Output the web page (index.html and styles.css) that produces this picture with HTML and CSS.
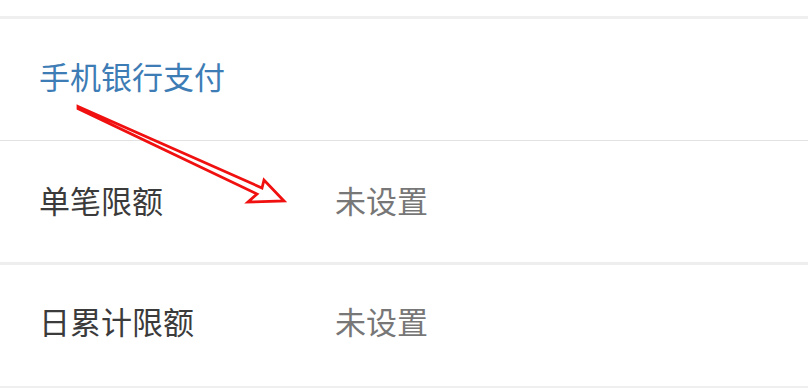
FILE: index.html
```html
<!DOCTYPE html>
<html lang="zh-CN">
<head>
<meta charset="utf-8">
<title>手机银行支付</title>
<link rel="stylesheet" href="styles.css">
</head>
<body>
<div class="page">
  <div class="top-gap"></div>
  <div class="section-title">手机银行支付</div>
  <div class="row row-single">
    <span class="label">单笔限额</span>
    <span class="value">未设置</span>
  </div>
  <div class="row row-daily">
    <span class="label">日累计限额</span>
    <span class="value">未设置</span>
  </div>
  <svg class="arrow" width="808" height="388" viewBox="0 0 808 388">
    <polygon points="78,106.5 262,188 264,180 284,201 248,202 257,194 78,108.5" fill="none" stroke="#f01010" stroke-width="2.8" stroke-linejoin="miter"/>
  </svg>
</div>
</body>
</html>
```
FILE: styles.css
```css
html, body {
  margin: 0;
  padding: 0;
  background: #ffffff;
}
.page {
  position: relative;
  width: 808px;
  height: 388px;
  overflow: hidden;
  font-family: "Noto Sans CJK SC", "Noto Sans", sans-serif;
  font-size: 31px;
}
.top-gap {
  height: 16px;
  border-bottom: 3px solid #efefef;
}
.section-title {
  height: 122px;
  box-sizing: border-box;
  padding: 0 0 8px 39px;
  display: flex;
  align-items: center;
  color: #3d7cb5;
  border-bottom: 1px solid #e2e2e2;
}
.row {
  display: grid;
  grid-template-columns: 296px 1fr;
  align-items: center;
  padding-left: 39px;
  box-sizing: border-box;
}
.row-single {
  height: 124px;
  border-bottom: 3px solid #eeeeee;
  padding-bottom: 5px;
}
.row-daily {
  height: 123px;
  border-bottom: 2px solid #efefef;
  padding-bottom: 10px;
}
.label {
  color: #3b3b3b;
}
.value {
  color: #777777;
}
.arrow {
  position: absolute;
  left: 0;
  top: 0;
  pointer-events: none;
}
```
